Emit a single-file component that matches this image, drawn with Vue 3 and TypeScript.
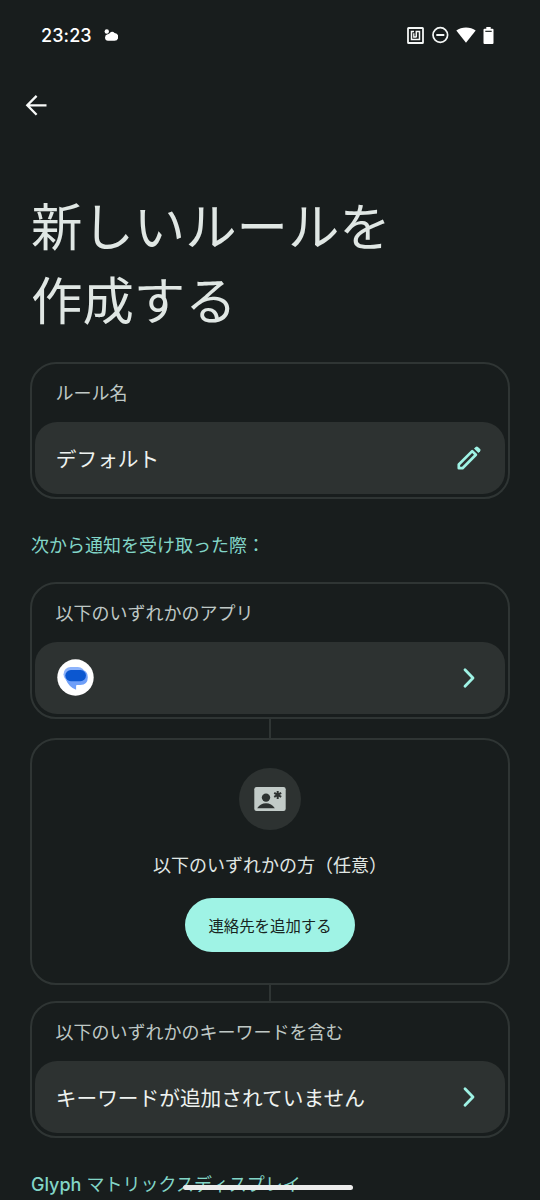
<script setup lang="ts">
interface Rule {
  label: string
  value: string
}
const nameRule: Rule = { label: 'ルール名', value: 'デフォルト' }
const appRule: Rule = { label: '以下のいずれかのアプリ', value: '' }
const keywordRule: Rule = {
  label: '以下のいずれかのキーワードを含む',
  value: 'キーワードが追加されていません',
}
</script>

<template>
  <main class="screen">
    <header class="status">
      <span class="clock">23:23</span>
      <svg class="weather" width="14" height="13" viewBox="0 0 14 13" fill="#fff">
        <circle cx="2.8" cy="2.5" r="2.2" />
        <path d="M4 11.800a3.300 3.300 0 0 1-.4-6.500C4.500 5.200 5.200 4.800 5.800 4A3.300 3.300 0 0 1 10.600 4 3.900 3.900 0 0 1 10 11.800Z" />
      </svg>
      <div class="tray">
        <svg width="17" height="17" viewBox="0 0 17 17" fill="none" stroke="#f4f7f6">
          <rect x="1" y="1" width="15" height="15" rx=".6" stroke-width="1.800" />
          <path d="M7 4.500H4.500v8h8v-8H9.300V10" stroke-width="1.500" />
          <path d="M6.800 6.300v3.700h2.800" stroke-width="1.300" />
        </svg>
        <svg width="18" height="18" viewBox="0 0 18 18" fill="none" stroke="#f4f7f6">
          <circle cx="9.300" cy="9" r="7.300" stroke-width="1.700" />
          <path d="M5.300 9h8" stroke-width="2" />
        </svg>
        <svg width="20" height="16" viewBox="0 0 20 16" fill="#fff">
          <path d="M.300 3.600C5.500-.600 14.500-.600 19.700 3.600L10 15.800Z" />
        </svg>
        <svg width="11" height="17" viewBox="0 0 11 17">
          <path fill="#fff" d="M3.300 0h4.400v1.800h1.800a1 1 0 0 1 1 1V16a1 1 0 0 1-1 1h-8a1 1 0 0 1-1-1V2.800a1 1 0 0 1 1-1h1.800Z" />
          <path fill="#303635" d="M2.300 3.700h6.400v1.300H2.300z" />
        </svg>
      </div>
    </header>

    <nav class="toolbar">
      <svg width="22" height="22" viewBox="0 0 22 22" fill="none" stroke="#f7f9f8" stroke-width="2.300">
        <path d="M21.500 11.300H3M11.600 1.900 2.300 11.300l9.300 9.400" />
      </svg>
    </nav>

    <h1 class="title">新しいルールを<br />作成する</h1>

    <section class="card">
      <div class="label">{{ nameRule.label }}</div>
      <div class="row">
        <span class="value">{{ nameRule.value }}</span>
        <svg class="pencil" width="26" height="26" viewBox="0 0 26 26" fill="none" stroke="#9ff3e5">
          <path d="M2.800 23.200v-3.700L16.200 6.100l3.700 3.700L6.500 23.200Z" stroke-width="2.700" stroke-linejoin="round" />
          <path fill="#9ff3e5" stroke="none" d="m18 3.600 1.700-1.700q1.100-1 2.200 0l2.200 2.200q1 1.100 0 2.200l-1.700 1.700Z" />
        </svg>
      </div>
    </section>

    <h2 class="section">次から通知を受け取った際：</h2>

    <section class="card">
      <div class="label">{{ appRule.label }}</div>
      <div class="row">
        <svg class="app" width="37" height="37" viewBox="0 0 37 37">
          <circle cx="18.500" cy="18.500" r="18.200" fill="#fff" />
          <rect x="6.500" y="8" width="21.500" height="14.500" rx="7.200" fill="#8db3fb" />
          <path fill="#6f9ff8" d="M23.500 10.500q7.300.500 7.300 7.800 0 7.700-7.500 7.700H20q-.900 0-.900 1v3.800Q12.300 28.500 9 21Z" />
          <rect x="8.300" y="11" width="20.700" height="11.200" rx="5.600" fill="#0b57d0" />
        </svg>
        <svg class="chevron" width="14" height="22" viewBox="0 0 14 22"><path d="M3 2.800 11 11l-8 8.200" /></svg>
      </div>
    </section>

    <div class="link first"></div>

    <section class="card contact">
      <div class="avatar">
        <svg width="32" height="26" viewBox="0 0 32 26">
          <rect x=".300" y="1" width="31.400" height="24" rx="2.200" fill="#c2cbc8" />
          <g fill="#2d3231">
            <circle cx="12" cy="11.600" r="4.200" />
            <path d="M3.200 22.300q3.300-5 8.800-5t8.800 5Z" />
          </g>
          <path d="M23.700 4.900v8M20.200 6.900l7 4M20.200 10.900l7-4" stroke="#2d3231" stroke-width="2" />
        </svg>
      </div>
      <p class="contact-text">以下のいずれかの方（任意）</p>
      <button class="add">連絡先を追加する</button>
    </section>

    <div class="link second"></div>

    <section class="card">
      <div class="label">{{ keywordRule.label }}</div>
      <div class="row">
        <span class="value">{{ keywordRule.value }}</span>
        <svg class="chevron" width="14" height="22" viewBox="0 0 14 22"><path d="M3 2.800 11 11l-8 8.200" /></svg>
      </div>
    </section>

    <h2 class="section"><span class="latin">Glyph</span> マトリックスディスプレイ</h2>
    <div class="home-bar"></div>
  </main>
</template>

<style>
html,
body {
  background: #181d1d;
}
</style>

<style scoped>
.screen {
  position: relative;
  box-sizing: border-box;
  width: 540px;
  height: 1200px;
  overflow: hidden;
  padding: 0 30px;
  background: #181d1d;
  color: #eef2f0;
  font-family: Inter, "Noto Sans CJK JP", sans-serif;
}
svg {
  display: block;
  flex: none;
}
.status {
  display: flex;
  align-items: center;
  height: 70px;
  padding: 0 16px 0 11px;
}
.clock {
  width: 63px;
  color: #fff;
  font-size: 18px;
  font-weight: 450;
  letter-spacing: 0.1px;
}
.tray {
  display: flex;
  align-items: center;
  gap: 7px;
  margin-left: auto;
}
.toolbar {
  height: 71px;
  margin: 24px 0 0 -5px;
}
.title {
  margin: 22px 0 0 1px;
  height: 175px;
  color: #e0e7e4;
  font: 400 51.4px/74px "Noto Sans CJK JP", sans-serif;
}
.card {
  box-sizing: border-box;
  height: 137px;
  padding: 3px;
  border: 2px solid #2f3534;
  border-radius: 26px;
}
.label {
  height: 55px;
  padding-left: 20.500px;
  color: #bfc8c5;
  font: 400 18px/50px "Noto Sans CJK JP", sans-serif;
}
.row {
  display: flex;
  align-items: center;
  justify-content: space-between;
  height: 72px;
  padding: 0 23px 0 20.800px;
  border-radius: 22px;
  background: #2d3231;
}
.value {
  font: 400 20.700px/30px "Noto Sans CJK JP", sans-serif;
}
.app {
  margin: -2px 0 0 1.400px;
}
.chevron {
  margin-right: 6px;
}
.chevron path {
  fill: none;
  stroke: #9ff3e5;
  stroke-width: 2.800;
  stroke-linecap: round;
  stroke-linejoin: round;
}
.section {
  height: 83px;
  margin: 0;
  padding-left: 1px;
  color: #82d5c7;
  font: 400 18px/93px Inter, "Noto Sans CJK JP", sans-serif;
}
.latin {
  font-weight: 500;
}
.link {
  width: 2px;
  margin: 0 auto;
  background: #2f3534;
}
.first {
  height: 19px;
}
.second {
  height: 16px;
}
.contact {
  display: flex;
  flex-direction: column;
  align-items: center;
  height: 247px;
  padding-top: 28px;
}
.avatar {
  display: grid;
  place-items: center;
  width: 62px;
  height: 62px;
  border-radius: 50%;
  background: #2d3231;
}
.contact-text {
  margin: 19px 0;
  color: #e0e7e4;
  font: 400 18px/30px "Noto Sans CJK JP", sans-serif;
}
.add {
  width: 170px;
  height: 54px;
  padding: 0;
  border: 0;
  border-radius: 27px;
  background: #9ff3e5;
  color: #182522;
  font: 400 15.400px/24px "Noto Sans CJK JP", sans-serif;
}
.home-bar {
  position: absolute;
  bottom: 10px;
  left: 183px;
  width: 170px;
  height: 5px;
  border-radius: 3px;
  background: #ececec;
}
</style>
